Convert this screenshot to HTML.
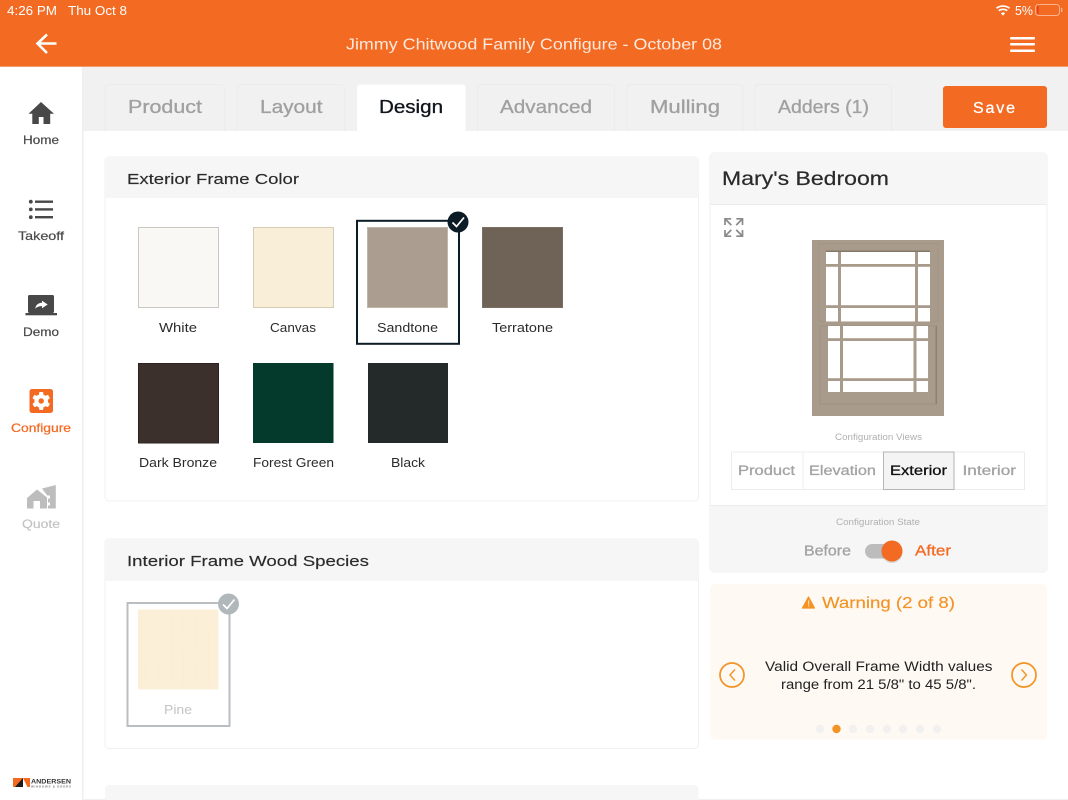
<!DOCTYPE html>
<html><head><meta charset="utf-8"><title>Configure</title>
<style>
html,body{margin:0;padding:0;background:#fff;width:1068px;height:800px;overflow:hidden}
svg{display:block}
text{font-family:"Liberation Sans",sans-serif}
.m{stroke-width:.3px}
</style></head><body>
<svg width="1068" height="800" viewBox="0 0 1068 800" xmlns="http://www.w3.org/2000/svg">
<rect width="1068" height="800" fill="#fff"/>
<!-- header -->
<rect width="1068" height="66" fill="#F36A23"/>
<rect y="66" width="1068" height="1" fill="#f39a6c"/>
<g fill="#fff">
<text x="7" y="15" font-size="13" textLength="50" lengthAdjust="spacingAndGlyphs">4:26 PM</text>
<text x="68" y="15" font-size="13" textLength="59" lengthAdjust="spacingAndGlyphs">Thu Oct 8</text>
<text x="1015" y="15" font-size="13" textLength="18" lengthAdjust="spacingAndGlyphs">5%</text>
<text x="346" y="49.5" font-size="16" textLength="376" lengthAdjust="spacingAndGlyphs" fill="#fde9dd">Jimmy Chitwood Family Configure - October 08</text>
</g>
<!-- wifi -->
<g fill="none" stroke="#fff" stroke-width="1.6">
<path d="M996.5 8.2a11 11 0 0 1 13 0"/><path d="M998.7 10.8a7 7 0 0 1 8.6 0"/>
</g>
<path d="M1000.8 13.2a3.6 3.6 0 0 1 4.4 0L1003 15.6z" fill="#fff"/>
<!-- battery -->
<rect x="1035.5" y="4.5" width="24" height="11" rx="3" fill="none" stroke="#f9b48f"/>
<rect x="1037" y="6" width="1.6" height="8" fill="#e8401a"/>
<rect x="1061" y="8" width="1.3" height="4" fill="#f9b48f"/>
<!-- back arrow -->
<path d="M56.500 43.500H38M47 34.500L37.500 43.500l9.500 9.500" fill="none" stroke="#fff" stroke-width="2.600"/>
<!-- hamburger -->
<g fill="#fff"><rect x="1010" y="37" width="25" height="2.500" rx="1"/><rect x="1010" y="43" width="25" height="2.500" rx="1"/><rect x="1010" y="49.500" width="25" height="2.500" rx="1"/></g>

<!-- content bg -->
<rect x="83" y="67" width="985" height="64" fill="#f1f1f1"/>
<rect x="82" y="67" width="1.500" height="733" fill="#efefef"/>
<rect x="83" y="799" width="985" height="1" fill="#f0f0f0"/>

<!-- tabs -->
<g fill="#f1f1f1" stroke="#ececec" stroke-width="1.200">
<path d="M105 131V88a3.500 3.500 0 0 1 3.500-3.500H221a3.500 3.500 0 0 1 3.500 3.500V131"/>
<path d="M237 131V88a3.500 3.500 0 0 1 3.500-3.500H341a3.500 3.500 0 0 1 3.500 3.500V131"/>
<path d="M477.500 131V88a3.500 3.500 0 0 1 3.500-3.500H611a3.500 3.500 0 0 1 3.500 3.500V131"/>
<path d="M627 131V88a3.500 3.500 0 0 1 3.500-3.500H739.500a3.500 3.500 0 0 1 3.500 3.500V131"/>
<path d="M755 131V88a3.500 3.500 0 0 1 3.500-3.500H888a3.500 3.500 0 0 1 3.500 3.500V131"/>
</g>
<path d="M357 131V87.500a3 3 0 0 1 3-3H462.500a3 3 0 0 1 3 3V131z" fill="#fff"/>
<g font-size="18" fill="#a0a0a0" stroke="#a0a0a0" class="m">
<text x="128" y="113" textLength="74" lengthAdjust="spacingAndGlyphs">Product</text>
<text x="260" y="113" textLength="62.500" lengthAdjust="spacingAndGlyphs">Layout</text>
<text x="500" y="113" textLength="92" lengthAdjust="spacingAndGlyphs">Advanced</text>
<text x="650" y="113" textLength="70" lengthAdjust="spacingAndGlyphs">Mulling</text>
<text x="778" y="113" textLength="91" lengthAdjust="spacingAndGlyphs">Adders (1)</text>
</g>
<text x="379" y="113" font-size="18" textLength="64" lengthAdjust="spacingAndGlyphs" fill="#10141c" stroke="#10141c" class="m">Design</text>
<!-- save -->
<rect x="943" y="86" width="104" height="42" rx="3" fill="#F36A23"/>
<text x="973" y="113" font-size="16" textLength="42" lengthAdjust="spacing" fill="#fff" stroke="#fff" class="m">Save</text>

<!-- sidebar -->
<g>
<path d="M41 102L28.500 113.800h3.800V124H38.800v-7h4.700v7H50.200V113.800h3.800z" fill="#484848"/>
<g fill="#484848" font-size="12" stroke="#484848" stroke-width=".2">
<text x="23" y="144" textLength="36" lengthAdjust="spacingAndGlyphs">Home</text>
<text x="18" y="240" textLength="46" lengthAdjust="spacingAndGlyphs">Takeoff</text>
<text x="23" y="336" textLength="36" lengthAdjust="spacingAndGlyphs">Demo</text>
</g>
<!-- list -->
<g fill="#484848">
<circle cx="30.800" cy="201.700" r="1.900"/><circle cx="30.800" cy="209.400" r="1.900"/><circle cx="30.800" cy="217.200" r="1.900"/>
<rect x="35" y="200.500" width="18" height="2.400"/><rect x="35" y="208.200" width="18" height="2.400"/><rect x="35" y="216" width="18" height="2.400"/>
</g>
<!-- laptop -->
<rect x="28" y="295" width="26" height="18" rx="1.500" fill="#484848"/>
<rect x="25.500" y="313" width="31.500" height="2.300" fill="#484848"/>
<path d="M35.200 308.700c.7-3.800 2.900-5.700 6.800-5.900V300.700l5.700 3.800-5.700 3.800v-2.200c-3 0-5 .8-6.800 2.600z" fill="#fff"/>
<!-- gear -->
<rect x="29.500" y="389" width="23.500" height="24" rx="2.500" fill="#F36A23"/>
<g transform="translate(41.200 401)">
<g fill="#fff">
<circle r="6.800"/>
<rect x="-2.100" y="-9" width="4.200" height="18" rx="1"/>
<rect x="-2.100" y="-9" width="4.200" height="18" rx="1" transform="rotate(60)"/>
<rect x="-2.100" y="-9" width="4.200" height="18" rx="1" transform="rotate(120)"/>
</g>
<circle r="2.700" fill="#F36A23"/>
</g>
<text x="11" y="432" font-size="12" textLength="60" lengthAdjust="spacingAndGlyphs" fill="#F36A23" stroke="#F36A23" stroke-width=".25">Configure</text>
<!-- quote -->
<path d="M27 498l10-8.500 10 8V508.500H40V501H33.500v7.500H27z" fill="#bdbdbd"/>
<path d="M42 488.500l13.800-3.500V508.500H48v-3h2v-3h-2v-4h2v-3h-2.800z" fill="#bdbdbd"/>
<text x="22" y="528" font-size="12" textLength="38" lengthAdjust="spacingAndGlyphs" fill="#c2c2c2" stroke="#c2c2c2" stroke-width=".15">Quote</text>
<!-- logo -->
<rect x="13" y="778" width="17" height="9" fill="#F36A23"/>
<path d="M15 787l8-9v9z" fill="#1c1c1c"/>
<path d="M23 778l4.500 9H23z" fill="#fff"/>
<text x="31" y="783.600" font-size="6.500" font-weight="700" textLength="40" lengthAdjust="spacingAndGlyphs" fill="#333">ANDERSEN</text>
<text x="31" y="787.500" font-size="3" font-weight="700" textLength="40" lengthAdjust="spacing" fill="#777">WINDOWS &amp; DOORS</text>
</g>

<!-- exterior panel -->
<rect x="105" y="157" width="593.500" height="344" rx="4" fill="#fff" stroke="#f0f0f0"/>
<path d="M105 198V161a4 4 0 0 1 4-4H694.500a4 4 0 0 1 4 4V198z" fill="#f6f6f6"/>
<text x="127" y="184" font-size="15" textLength="172" lengthAdjust="spacingAndGlyphs" fill="#2b2b2b" stroke="#2b2b2b" stroke-width=".15">Exterior Frame Color</text>
<rect x="138.500" y="227.500" width="80" height="80" fill="#f9f8f5" stroke="#cbc8c1"/>
<rect x="253.500" y="227.500" width="80" height="80" fill="#f9efd8" stroke="#d5ccb6"/>
<rect x="367.500" y="227.500" width="80" height="80" fill="#ab9d8f" stroke="#c0b5aa"/>
<rect x="482.500" y="227.500" width="80" height="80" fill="#6f6256" stroke="#7b6f63"/>
<rect x="138.500" y="363.500" width="80" height="79.500" fill="#3b302c" stroke="#2c2321"/>
<rect x="253" y="363" width="80.500" height="80" fill="#033a2b"/>
<rect x="368" y="363" width="80" height="80" fill="#242a29"/>
<rect x="357" y="220.800" width="102" height="123" fill="none" stroke="#0b1c26" stroke-width="2"/>
<circle cx="458" cy="222" r="10.500" fill="#0b1c26"/>
<path d="M452.500 222.500l4 4 7.500-9" fill="none" stroke="#fff" stroke-width="1.700"/>
<g font-size="13" fill="#2b2b2b">
<text x="159" y="332" textLength="38" lengthAdjust="spacingAndGlyphs">White</text>
<text x="270" y="332" textLength="46" lengthAdjust="spacingAndGlyphs">Canvas</text>
<text x="377" y="332" textLength="61" lengthAdjust="spacingAndGlyphs">Sandtone</text>
<text x="492" y="332" textLength="61" lengthAdjust="spacingAndGlyphs">Terratone</text>
<text x="139" y="467" textLength="78" lengthAdjust="spacingAndGlyphs">Dark Bronze</text>
<text x="253" y="467" textLength="81" lengthAdjust="spacingAndGlyphs">Forest Green</text>
<text x="391" y="467" textLength="34" lengthAdjust="spacingAndGlyphs">Black</text>
</g>

<!-- interior panel -->
<rect x="105" y="539" width="593.500" height="209.500" rx="4" fill="#fff" stroke="#f0f0f0"/>
<path d="M105 581V543a4 4 0 0 1 4-4H694.500a4 4 0 0 1 4 4V581z" fill="#f6f6f6"/>
<text x="127" y="566" font-size="15" textLength="242" lengthAdjust="spacingAndGlyphs" fill="#2b2b2b" stroke="#2b2b2b" stroke-width=".15">Interior Frame Wood Species</text>
<rect x="138" y="609.500" width="80.500" height="80" fill="#fcefd8"/>
<g stroke="#f7e6c8" stroke-width=".5" opacity=".45" fill="none">
<path d="M146 610c1 25-1 50 0 79M158 610c-1 25 1 50 0 79M171 610c1 28 0 50 1 79M183 610c-1 25 1 50 0 79M196 610c1 25-1 50 0 79M208 610c0 25 1 50 0 79"/>
</g>
<rect x="127.500" y="603" width="102" height="123" fill="none" stroke="#b8bec1" stroke-width="2"/>
<circle cx="228.500" cy="604" r="10.500" fill="#b1b8bb"/>
<path d="M223 604.500l4 4 7.500-9" fill="none" stroke="#fff" stroke-width="1.700"/>
<text x="164" y="714" font-size="13" textLength="28" lengthAdjust="spacingAndGlyphs" fill="#c4c4c4">Pine</text>

<!-- third panel -->
<path d="M105 800V789a4 4 0 0 1 4-4H694.500a4 4 0 0 1 4 4V800z" fill="#f6f6f6"/>

<!-- right panel -->
<rect x="710" y="153" width="337" height="419" rx="4" fill="#fff" stroke="#efefef"/>
<path d="M710 204V157a4 4 0 0 1 4-4H1043a4 4 0 0 1 4 4V204z" fill="#f6f6f6"/>
<rect x="710" y="204" width="337" height="1" fill="#ececec"/>
<text x="722" y="185" font-size="19.500" textLength="167" lengthAdjust="spacingAndGlyphs" fill="#2a2a2a" stroke="#2a2a2a" stroke-width=".2">Mary's Bedroom</text>
<!-- expand -->
<g fill="none" stroke="#8a8a8a" stroke-width="1.700">
<path d="M725 225v-6.200h6.200M725.300 219.100l6 6"/>
<path d="M742.500 225v-6.200h-6.200M742.200 219.100l-6 6"/>
<path d="M725 230v6.200h6.200M725.300 235.900l6-6"/>
<path d="M742.500 230v6.200h-6.200M742.200 235.900l-6-6"/>
</g>
<!-- window -->
<rect x="812" y="240" width="132" height="176" fill="#a99b8c"/>
<rect x="819" y="243.500" width="119" height="78" fill="none" stroke="#a39585" stroke-width="1"/>
<rect x="820" y="326" width="116.500" height="78" fill="none" stroke="#a09282" stroke-width="1"/>
<rect x="826" y="250.500" width="104" height="1.500" fill="#857869"/>
<rect x="826" y="252" width="104" height="69.500" fill="#fff"/>
<rect x="828" y="326" width="100" height="66" fill="#fff"/>
<g fill="#a99b8c">
<rect x="838" y="252" width="3" height="69.500"/>
<rect x="915" y="252" width="3" height="69.500"/>
<rect x="826" y="264" width="104" height="2.800"/>
<rect x="826" y="305.200" width="104" height="2.800"/>
<rect x="840" y="326" width="3" height="66"/>
<rect x="913.500" y="326" width="3" height="66"/>
<rect x="828" y="338.200" width="100" height="2.800"/>
<rect x="828" y="378.200" width="100" height="2.800"/>
</g>
<rect x="935.500" y="326" width="1.500" height="78" fill="#8d8071"/>
<!-- views -->
<text x="835" y="440" font-size="9" textLength="87" lengthAdjust="spacingAndGlyphs" fill="#b0b0b0">Configuration Views</text>
<rect x="731.500" y="452" width="293" height="37.500" fill="#fff" stroke="#ececec"/>
<rect x="802.500" y="452" width="1" height="37.500" fill="#ececec"/>
<rect x="883.500" y="452" width="70.500" height="37.500" fill="#f4f4f4" stroke="#b5b5b5"/>
<g font-size="13.500" fill="#a3a3a3" stroke="#a3a3a3" class="m">
<text x="738" y="475" textLength="57" lengthAdjust="spacingAndGlyphs">Product</text>
<text x="809" y="475" textLength="67" lengthAdjust="spacingAndGlyphs">Elevation</text>
<text x="962.500" y="475" textLength="53.500" lengthAdjust="spacingAndGlyphs">Interior</text>
</g>
<text x="890" y="475" font-size="13.500" textLength="57" lengthAdjust="spacingAndGlyphs" fill="#111" stroke="#111" class="m">Exterior</text>
<!-- state -->
<path d="M710 505.500H1047V568a4 4 0 0 1-4 4H714a4 4 0 0 1-4-4z" fill="#f6f6f6"/>
<rect x="710" y="505" width="337" height="1" fill="#ececec"/>
<text x="836" y="525" font-size="9" textLength="84" lengthAdjust="spacingAndGlyphs" fill="#b0b0b0">Configuration State</text>
<text x="804" y="555.500" font-size="14.500" textLength="47" lengthAdjust="spacingAndGlyphs" fill="#a3a3a3" stroke="#a3a3a3" class="m">Before</text>
<text x="915" y="555.500" font-size="14.500" textLength="36" lengthAdjust="spacingAndGlyphs" fill="#F36A23" stroke="#F36A23" class="m">After</text>
<rect x="865" y="544" width="28" height="14.500" rx="7.250" fill="#bcbcbc"/>
<circle cx="892" cy="552.500" r="10.500" fill="#000" opacity=".12"/>
<circle cx="892" cy="551" r="10.500" fill="#F36A23"/>

<!-- warning -->
<rect x="710" y="584" width="337" height="155.500" rx="5" fill="#fef9f3"/>
<path d="M808.500 597L802.500 608H814.500z" fill="#F39325" stroke="#F39325" stroke-width="1.200" stroke-linejoin="round"/>
<rect x="808" y="600.500" width="1.200" height="4.200" fill="#fbd9ae"/>
<rect x="808" y="605.500" width="1.200" height="1.300" fill="#fbd9ae"/>
<text x="822" y="608" font-size="15.500" textLength="133" lengthAdjust="spacingAndGlyphs" fill="#F39325" stroke="#F39325" stroke-width=".15">Warning (2 of 8)</text>
<text x="765" y="671" font-size="13.500" textLength="227.500" lengthAdjust="spacingAndGlyphs" fill="#222">Valid Overall Frame Width values</text>
<text x="781" y="689" font-size="13.500" textLength="195" lengthAdjust="spacingAndGlyphs" fill="#222">range from 21 5/8" to 45 5/8".</text>
<g fill="none" stroke="#F39325">
<circle cx="732" cy="675" r="12" stroke-width="1.700"/>
<circle cx="1024" cy="675" r="12" stroke-width="1.700"/>
<path d="M735 669.500l-5 5.500 5 5.500M1021.500 669.500l5 5.500-5 5.500" stroke-width="1.400"/>
</g>
<g fill="#f2f1ef">
<circle cx="820" cy="729" r="4.200"/><circle cx="853" cy="729" r="4.200"/><circle cx="870" cy="729" r="4.200"/><circle cx="887" cy="729" r="4.200"/><circle cx="903" cy="729" r="4.200"/><circle cx="920" cy="729" r="4.200"/><circle cx="937" cy="729" r="4.200"/>
</g>
<circle cx="836.500" cy="729" r="4.200" fill="#F39325"/>
</svg>
</body></html>
